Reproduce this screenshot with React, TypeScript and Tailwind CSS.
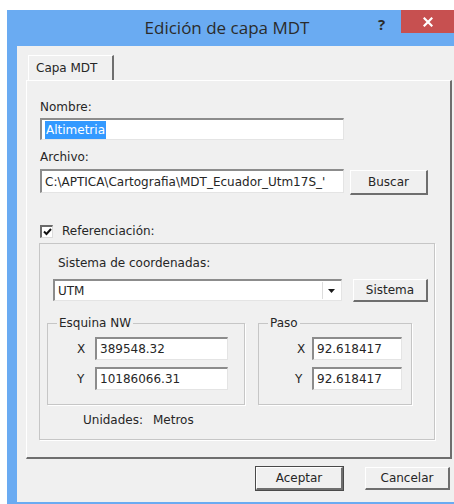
import React from 'react';

const font = { fontFamily: '"DejaVu Sans", Verdana, sans-serif' };

// classic sunken edit box
const Field: React.FC<{ value?: string; className?: string; children?: React.ReactNode }> = ({ value, className = '', children }) => (
  <div
    className={`flex items-center bg-white border-t-2 border-l-2 border-b border-r border-t-[#8c8c8c] border-l-[#8c8c8c] border-b-[#e4e4e4] border-r-[#e4e4e4] pl-[3px] text-[12px] text-[#262626] overflow-hidden whitespace-nowrap ${className}`}
  >
    {children ?? value}
  </div>
);

// classic raised push button
const Btn: React.FC<{ label: string; className?: string; isDefault?: boolean }> = ({ label, className = '', isDefault }) => (
  <div
    className={`flex items-center justify-center bg-[#f0f0f0] text-[12px] text-[#262626] border-t border-l border-b-2 border-r-2 border-t-white border-l-white border-b-[#6e6e6e] border-r-[#6e6e6e] ${
      isDefault ? 'outline outline-1 outline-[#4a4a4a]' : ''
    } ${className}`}
  >
    {label}
  </div>
);

const Group: React.FC<{ title: string; className?: string; children: React.ReactNode }> = ({ title, className = '', children }) => (
  <div className={`relative border border-[#c6c6c6] shadow-[1px_1px_0_#ffffff] ${className}`}>
    <span className="absolute -top-[8px] left-[9px] bg-[#f0f0f0] px-[2px] text-[12px] leading-[15px] text-[#262626]">{title}</span>
    {children}
  </div>
);

export default function App() {
  return (
    <div className="w-[454px] h-[504px] bg-white pt-[10px] pl-[7px] overflow-hidden" style={font}>
      <div className="w-[470px] h-[494px] bg-[#6aabf2] flex flex-col">
        {/* title bar */}
        <div className="relative h-[36px] shrink-0 flex items-center">
          <div
            className="w-[454px] text-center text-[17px] text-[#2b2b2b] pr-[14px]"
            style={{ fontFamily: '"Open Sans", "Noto Sans", sans-serif' }}
          >
            Edición de capa MDT
          </div>
          <span className="absolute left-[371px] top-[3px] text-[15px] font-bold text-[#2b2b2b]" style={{ fontFamily: '"Open Sans", sans-serif' }}>
            ?
          </span>
          <div className="absolute left-[394px] top-0 w-[60px] h-[23px] bg-[#c75050] flex items-center justify-center">
            <svg width="10" height="10" viewBox="0 0 10 10" className="-ml-[6px]">
              <path d="M1.5 1.5 L8.5 8.5 M8.5 1.5 L1.5 8.5" stroke="#ffffff" strokeWidth="2.2" strokeLinecap="square" />
            </svg>
          </div>
        </div>

        {/* client area */}
        <div className="flex-1 ml-[10px] mb-[2px] bg-[#f0f0f0] pt-[9px] pl-[9px] flex flex-col">
          {/* tab header */}
          <div className="ml-[2px] w-[86px] h-[25px] border-t border-l border-r-2 border-t-white border-l-white border-r-[#6e6e6e] flex items-center pl-[7px] text-[12px] text-[#262626]">
            Capa MDT
          </div>

          {/* tab page */}
          <div className="w-[426px] h-[379px] border-t border-l border-b-2 border-r-2 border-t-white border-l-white border-b-[#6e6e6e] border-r-[#6e6e6e] pl-[13px] flex flex-col text-[12px] text-[#262626]">
            <div className="mt-[19px] leading-[15px]">Nombre:</div>
            <Field className="mt-[3px] w-[304px] h-[22px]">
              <span className="bg-[#3399ff] text-white px-[1px]">Altimetria</span>
            </Field>

            <div className="mt-[10px] leading-[15px]">Archivo:</div>
            <div className="mt-[4px] flex items-start">
              <Field className="w-[304px] h-[24px]" value="C:\APTICA\Cartografia\MDT_Ecuador_Utm17S_'" />
              <Btn label="Buscar" className="ml-[6px] mt-[1px] w-[78px] h-[25px]" />
            </div>

            <div className="mt-[29px] flex items-center h-[14px]">
              <div className="w-[13px] h-[13px] bg-white border-t-2 border-l-2 border-t-[#6a6a6a] border-l-[#6a6a6a] border-b border-r border-b-[#dcdcdc] border-r-[#dcdcdc] flex items-center justify-center">
                <svg width="9" height="8" viewBox="0 0 9 8">
                  <path d="M1 3.5 L3.5 6 L8 1" stroke="#111" strokeWidth="2" fill="none" />
                </svg>
              </div>
              <span className="ml-[9px]">Referenciación:</span>
            </div>

            {/* coordinate reference box */}
            <div className="mt-[5px] -ml-[1px] w-[396px] h-[197px] border border-[#c6c6c6] shadow-[1px_1px_0_#ffffff] pl-[7px] flex flex-col">
              <div className="mt-[12px] ml-[11px] leading-[15px]">Sistema de coordenadas:</div>
              <div className="mt-[8px] ml-[6px] flex items-start">
                <Field className="w-[289px] h-[22px] justify-between pr-[1px]">
                  <span>UTM</span>
                  <span className="w-[18px] h-[17px] flex items-center justify-center border-l border-[#dcdcdc]">
                    <svg width="7" height="4" viewBox="0 0 7 4">
                      <path d="M0 0 H7 L3.5 4 Z" fill="#1a1a1a" />
                    </svg>
                  </span>
                </Field>
                <Btn label="Sistema" className="ml-[11px] w-[75px] h-[23px]" />
              </div>

              <div className="mt-[21px] flex gap-[13px]">
                <Group title="Esquina NW" className="w-[198px] h-[82px]">
                  <div className="mt-[13px] pl-[29px] flex items-center">
                    <span className="w-[18px]">X</span>
                    <Field className="w-[133px] h-[23px]" value="389548.32" />
                  </div>
                  <div className="mt-[7px] pl-[29px] flex items-center">
                    <span className="w-[18px]">Y</span>
                    <Field className="w-[133px] h-[23px]" value="10186066.31" />
                  </div>
                </Group>
                <Group title="Paso" className="w-[154px] h-[82px]">
                  <div className="mt-[13px] pl-[38px] flex items-center">
                    <span className="w-[15px]">X</span>
                    <Field className="w-[90px] h-[23px]" value="92.618417" />
                  </div>
                  <div className="mt-[7px] pl-[36px] flex items-center">
                    <span className="w-[17px]">Y</span>
                    <Field className="w-[90px] h-[23px]" value="92.618417" />
                  </div>
                </Group>
              </div>

              <div className="mt-[8px] ml-[36px] leading-[15px] flex gap-[10px]">
                <span>Unidades:</span>
                <span>Metros</span>
              </div>
            </div>
          </div>

          {/* dialog buttons */}
          <div className="mt-[8px] w-[426px] flex justify-end gap-[22px] pr-[2px]">
            <Btn label="Aceptar" isDefault className="w-[87px] h-[23px]" />
            <Btn label="Cancelar" className="w-[85px] h-[23px]" />
          </div>
        </div>
      </div>
    </div>
  );
}
